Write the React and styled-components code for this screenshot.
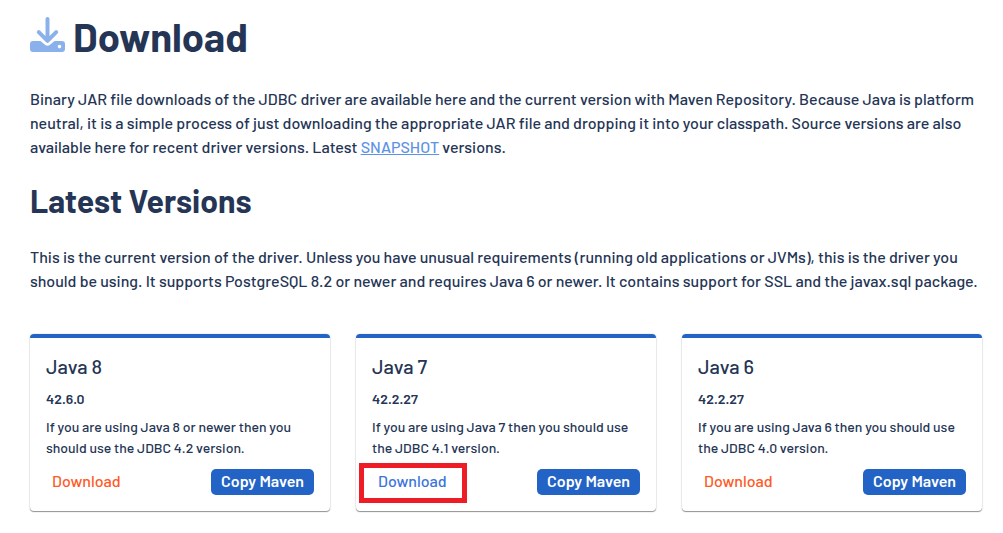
import React from "react";
import styled, { createGlobalStyle } from "styled-components";

const GlobalStyle = createGlobalStyle`
  *, *::before, *::after { box-sizing: border-box; }
  body {
    margin: 0;
    background: #fff;
    color: #253555;
    font-family: Barlow, Roboto, "Liberation Sans", sans-serif;
    font-size: 16px;
    font-weight: 500;
    line-height: 24px;
  }
`;

const Page = styled.main`
  padding: 13px 21px 20px 30px;
`;

const PageTitle = styled.h1`
  display: flex;
  align-items: center;
  gap: 8px;
  margin: 0 0 28px;
  font-size: 40px;
  line-height: 46px;
  font-weight: 700;
`;

const TitleIcon = styled.svg`
  width: 35px;
  height: 35px;
  margin-bottom: 4px;
  flex: none;
`;

const SectionTitle = styled.h2`
  margin: 21px 0 25px;
  font-size: 32px;
  line-height: 40px;
  font-weight: 700;
`;

const Paragraph = styled.p`
  margin: 0;
`;

const TextLink = styled.a`
  color: #5d93e4;
  text-decoration: underline;
`;

const CardGrid = styled.div`
  display: grid;
  grid-template-columns: repeat(3, 1fr);
  gap: 26px;
  margin-top: 41px;
`;

const Card = styled.article`
  padding: 15px 16px 16px;
  border-top: 4px solid #2263c5;
  border-radius: 4px;
  box-shadow: 0 1px 1px rgba(0, 0, 0, 0.4), 0 0 2px rgba(0, 0, 0, 0.18);
`;

const CardTitle = styled.h3`
  margin: 0 0 8px;
  font-size: 20px;
  line-height: 27px;
  font-weight: 500;
`;

const Version = styled.p`
  margin: 0 0 7px;
  font-size: 14px;
  line-height: 21px;
  font-weight: 600;
`;

const CardText = styled.p`
  margin: 0 0 11px;
  font-size: 14px;
  line-height: 21px;
  font-weight: 500;
`;

const Actions = styled.div`
  display: flex;
  justify-content: space-between;
  align-items: center;
`;

const DownloadLink = styled.a`
  position: relative;
  padding: 0 6px 2px;
  line-height: 24px;
  color: ${(p) => (p.$marked ? "#3b75db" : "#ff5a26")};
  text-decoration: none;
`;

const Marker = styled.span`
  position: absolute;
  inset: -6px -14px -8px -13px;
  border: 5px solid #ee1c25;
  pointer-events: none;
`;

const CopyButton = styled.button`
  height: 26px;
  padding: 0 10px 2px;
  border: 0;
  border-radius: 5px;
  background: #2263c5;
  color: #fff;
  font: inherit;
  font-weight: 600;
  line-height: 24px;
  cursor: pointer;
`;

const releases = [
  { name: "Java 8", version: "42.6.0", text: ["If you are using Java 8 or newer then you", "should use the JDBC 4.2 version."] },
  { name: "Java 7", version: "42.2.27", text: ["If you are using Java 7 then you should use", "the JDBC 4.1 version."], marked: true },
  { name: "Java 6", version: "42.2.27", text: ["If you are using Java 6 then you should use", "the JDBC 4.0 version."] },
];

function DownloadIcon() {
  return (
    <TitleIcon viewBox="0 0 35 35" aria-hidden="true">
      <path
        fill="#8bb1ec"
        fillRule="evenodd"
        d="M3 24H10.5L15 27.8Q17.5 29.8 20 27.8L24.5 24H32Q35 24 35 27V32Q35 35 32 35H3Q0 35 0 32V27Q0 24 3 24ZM29.5 27.8A1.8 1.8 0 1 0 29.5 31.4A1.8 1.8 0 1 0 29.5 27.8Z"
      />
      <path
        d="M17.5 2V23.5M8.8 15.2L17.5 23.8L26.2 15.2"
        fill="none"
        stroke="#8bb1ec"
        strokeWidth="4"
        strokeLinecap="round"
        strokeLinejoin="round"
      />
    </TitleIcon>
  );
}

function ReleaseCard({ release }) {
  return (
    <Card>
      <CardTitle>{release.name}</CardTitle>
      <Version>{release.version}</Version>
      <CardText>
        {release.text[0]}
        <br />
        {release.text[1]}
      </CardText>
      <Actions>
        <DownloadLink href="#download" $marked={release.marked}>
          Download
          {release.marked && <Marker />}
        </DownloadLink>
        <CopyButton type="button">Copy Maven</CopyButton>
      </Actions>
    </Card>
  );
}

export default function App() {
  return (
    <>
      <GlobalStyle />
      <Page>
        <PageTitle>
          <DownloadIcon />
          Download
        </PageTitle>
        <Paragraph>
          Binary JAR file downloads of the JDBC driver are available here and the current version with Maven
          Repository. Because Java is platform
          <br />
          neutral, it is a simple process of just downloading the appropriate JAR file and dropping it into your
          classpath. Source versions are also
          <br />
          available here for recent driver versions. Latest <TextLink href="#snapshot">SNAPSHOT</TextLink> versions.
        </Paragraph>
        <SectionTitle>Latest Versions</SectionTitle>
        <Paragraph>
          This is the current version of the driver. Unless you have unusual requirements (running old applications
          or JVMs), this is the driver you
          <br />
          should be using. It supports PostgreSQL 8.2 or newer and requires Java 6 or newer. It contains support for
          SSL and the javax.sql package.
        </Paragraph>
        <CardGrid>
          {releases.map((release) => (
            <ReleaseCard key={release.name} release={release} />
          ))}
        </CardGrid>
      </Page>
    </>
  );
}
